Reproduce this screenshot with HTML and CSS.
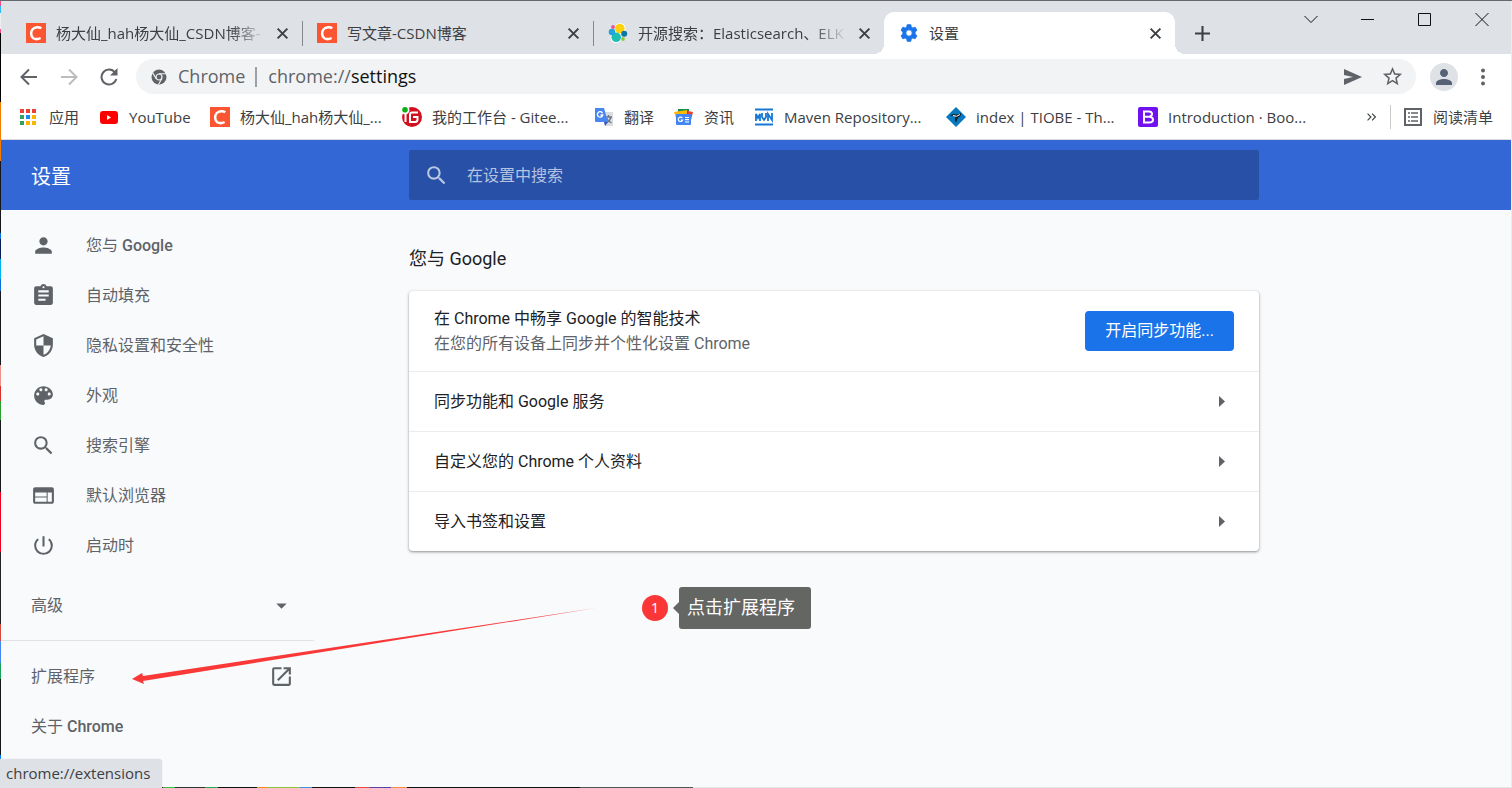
FILE: index.html
```html
<!DOCTYPE html>
<html lang="zh-CN">
<head>
<meta charset="utf-8">
<title>设置</title>
<link rel="stylesheet" href="styles.css">
</head>
<body>
<svg width="0" height="0" class="defs" aria-hidden="true">
  <symbol id="i-close" viewBox="0 0 12 12"><path d="M1.500 1.500l9 9M10.500 1.500l-9 9" stroke="currentColor" stroke-width="1.800" fill="none"/></symbol>
  <symbol id="i-csdn" viewBox="0 0 20 20"><path fill="#fc5531" d="M0 0h20v20H0z"/><path d="M15.300 5.300C13 3.600 9 3.700 6.800 6c-2.400 2.700-2.200 7.400.5 9.200 2.100 1.300 5 1 7.300-.2" fill="none" stroke="#fff" stroke-width="2.500"/></symbol>
  <symbol id="i-search" viewBox="0 0 24 24"><path d="M15.500 14h-.79l-.28-.27A6.471 6.471 0 0 0 16 9.500 6.500 6.500 0 1 0 9.500 16c1.610 0 3.090-.59 4.230-1.570l.27.28v.79l5 4.990L20.490 19l-4.990-5zm-6 0C7.010 14 5 11.990 5 9.500S7.010 5 9.500 5 14 7.010 14 9.500 11.990 14 9.500 14z"/></symbol>
  <symbol id="i-person" viewBox="0 0 24 24"><path d="M12 12c2.210 0 4-1.790 4-4s-1.790-4-4-4-4 1.790-4 4 1.790 4 4 4zm0 2c-2.670 0-8 1.340-8 4v2h16v-2c0-2.660-5.330-4-8-4z"/></symbol>
  <symbol id="i-right" viewBox="0 0 6 11"><path d="M0 0l6 5.500L0 11z"/></symbol>
</svg>
<div class="window">
  <header class="tabstrip">
    <div class="tabs">
      <div class="tab">
        <svg class="favicon"><use href="#i-csdn"/></svg>
        <span class="tab-title fade">杨大仙_hah杨大仙_CSDN博客-</span>
        <button class="tab-close" aria-label="关闭"><svg><use href="#i-close"/></svg></button>
      </div>
      <div class="tab">
        <svg class="favicon"><use href="#i-csdn"/></svg>
        <span class="tab-title">写文章-CSDN博客</span>
        <button class="tab-close" aria-label="关闭"><svg><use href="#i-close"/></svg></button>
      </div>
      <div class="tab">
        <svg class="favicon" viewBox="0 0 20 20"><circle cx="12" cy="5.500" r="5.500" fill="#fff"/><circle cx="8" cy="14.500" r="5.500" fill="#fff"/><circle cx="11.800" cy="5.600" r="4.800" fill="#fed10a"/><circle cx="8.200" cy="14.300" r="4.800" fill="#1bbfb3"/><circle cx="4" cy="9" r="3.300" fill="#24a3dc"/><circle cx="16.200" cy="10.800" r="3" fill="#0b77a8"/><circle cx="5" cy="4" r="1.900" fill="#ef5098"/><circle cx="15" cy="16" r="1.900" fill="#93c83e"/></svg>
        <span class="tab-title fade">开源搜索：Elasticsearch、ELK</span>
        <button class="tab-close" aria-label="关闭"><svg><use href="#i-close"/></svg></button>
      </div>
      <div class="tab tab--active">
        <svg class="favicon blue" viewBox="0 0 24 24"><path d="M9.800 2h4.400l.5 2.900 1.900 1.100 2.800-1 2.200 3.800-2.300 1.900v2.600l2.300 1.900-2.200 3.800-2.800-1-1.900 1.100-.5 2.900H9.800l-.5-2.900L7.400 18l-2.800 1-2.200-3.800 2.300-1.900v-2.600L2.400 8.800 4.600 5l2.800 1 1.900-1.100zM12 8.200a3.800 3.800 0 1 0 0 7.600 3.800 3.800 0 0 0 0-7.600z" fill-rule="evenodd" stroke="currentColor" stroke-linejoin="round"/></svg>
        <span class="tab-title">设置</span>
        <button class="tab-close" aria-label="关闭"><svg><use href="#i-close"/></svg></button>
      </div>
      <button class="newtab" aria-label="新标签页"><svg viewBox="0 0 16 16"><path d="M8 0v16M0 8h16" stroke="currentColor" stroke-width="2.200"/></svg></button>
    </div>
    <div class="controls">
      <button aria-label="搜索标签页"><svg viewBox="0 0 14 14"><path d="M.5 4L7 10.500 13.500 4"/></svg></button>
      <button aria-label="最小化"><svg viewBox="0 0 14 14"><path d="M0 7.500h13"/></svg></button>
      <button aria-label="最大化"><svg viewBox="0 0 14 14"><path d="M.5 1.500h12v12H.5z"/></svg></button>
      <button aria-label="关闭窗口"><svg viewBox="0 0 14 14"><path d="M.5 1l13 13M13.500 1l-13 13"/></svg></button>
    </div>
  </header>

  <div class="toolbar">
    <button class="nav" aria-label="后退"><svg viewBox="0 0 18 18"><path d="M17 9H2M9 1.500L1.500 9 9 16.500"/></svg></button>
    <button class="nav nav--off" aria-label="前进"><svg viewBox="0 0 18 18"><path d="M1 9h15M9 1.500L16.500 9 9 16.500"/></svg></button>
    <button class="nav" aria-label="重新加载"><svg viewBox="0 0 18 18"><path d="M15 4.500A7.500 7.500 0 1 0 16.300 11"/><path d="M17.500 0v7.500H10z" class="solid"/></svg></button>
    <div class="omnibox">
      <svg class="chrome-icon" viewBox="0 0 16 16"><circle cx="8" cy="8" r="7.500" fill="#5f6368"/><circle cx="8" cy="8" r="3" fill="none" stroke="#f1f3f4" stroke-width="1.200"/><path d="M8 4.700h7M5.200 9.700L1.700 3.900M10.900 9.600L7.500 15.500" stroke="#f1f3f4" stroke-width="1.100"/></svg>
      <span class="site">Chrome</span><span class="bar"></span>
      <span class="url">chrome://<b>settings</b></span>
      <button class="send" aria-label="发送"><svg viewBox="0 0 18 16"><path d="M0 0l18 8L0 16v-6l9-2-9-2z"/></svg></button>
      <button aria-label="为此页添加书签"><svg viewBox="0 0 24 24"><path d="M22 9.240l-7.190-.62L12 2 9.190 8.630 2 9.240l5.460 4.730L5.820 21 12 17.270 18.180 21l-1.630-7.030L22 9.240zM12 15.400l-3.760 2.270 1-4.280-3.320-2.880 4.380-.38L12 6.100l1.710 4.040 4.380.38-3.320 2.880 1 4.280L12 15.400z"/></svg></button>
    </div>
    <button class="avatar" aria-label="个人资料"><svg><use href="#i-person"/></svg></button>
    <button class="menu" aria-label="菜单"><svg viewBox="0 0 4 18"><circle cx="2" cy="2.500" r="2"/><circle cx="2" cy="9" r="2"/><circle cx="2" cy="15.500" r="2"/></svg></button>
  </div>

  <nav class="bookmarks">
    <a href="#" class="bm bm--short"><svg viewBox="0 0 20 20"><g fill="#ea4335"><path d="M1 2h4v4H1zM7 2h4v4H7zM13 2h4v4h-4z"/></g><path fill="#34a060" d="M1 8h4v4H1zM1 14h4v4H1z"/><path fill="#1a86f0" d="M7 8h4v4H7z"/><path fill="#fbb400" d="M13 8h4v4h-4zM13 14h4v4h-4z"/><path fill="#fbb400" d="M7 14h4v4H7z"/></svg><span>应用</span></a>
    <a href="#" class="bm bm--mid"><svg viewBox="0 0 20 20"><rect x="1" y="4" width="18" height="13" rx="3" fill="#f00"/><path d="M8 8v5l4-2.500z" fill="#fff"/></svg><span>YouTube</span></a>
    <a href="#" class="bm"><svg><use href="#i-csdn"/></svg><span>杨大仙_hah杨大仙_...</span></a>
    <a href="#" class="bm"><svg viewBox="0 0 20 20"><circle cx="10" cy="10" r="10" fill="#d0101f"/><circle cx="3" cy="3" r="4.500" fill="#fff"/><circle cx="3" cy="2.800" r="2.800" fill="#0db014"/><path d="M3.500 7v8M16 5.500H10Q8 5.500 8 7.500V15h5q2.500 0 2.500-2.500V10H11" fill="none" stroke="#fff" stroke-width="2"/></svg><span>我的工作台 - Gitee...</span></a>
    <a href="#" class="bm bm--short"><svg viewBox="0 0 20 20"><path fill="#dadce0" d="M9 5h10v14h-8z"/><path d="M11 10h7M14.500 8v2M12 16q4-2 5-6M12.500 11q1 3 5 5" stroke="#6a7785" stroke-width="1.300" fill="none"/><path fill="#4a86f2" d="M1 1h9l4 14H2q-1 0-1-1z"/><path fill="#3454bd" d="M10 15h4l-3 4z"/><path d="M8.500 6.200A2.700 2.700 0 1 0 8.700 8H6.500" fill="none" stroke="#fff" stroke-width="1.300"/></svg><span>翻译</span></a>
    <a href="#" class="bm bm--short"><svg viewBox="0 0 20 20"><path fill="#188c46" d="M4 2h11v6H4z"/><path fill="#ea4335" d="M14 4l5 1-2 8h-3z"/><path fill="#fbb806" d="M0 5l13-2v8H2z"/><rect x="2" y="7" width="15" height="11" rx="1" fill="#4285f4"/><path d="M8.300 11a2.200 2.200 0 1 0 .3 2H6.800M11 10.500h4M11 12.700h4M11 15h4" fill="none" stroke="#fff" stroke-width="1.200"/></svg><span>资讯</span></a>
    <a href="#" class="bm"><svg viewBox="0 0 20 20"><path d="M1 2.500h18M1 17.500h18" stroke="#1778d3" stroke-width="2"/><path d="M2 14V7l2 4 2-4v7M8 6v4l2 3 2-3V6M14 14V7l4 6V6" fill="none" stroke="#1778d3" stroke-width="1.800"/></svg><span>Maven Repository...</span></a>
    <a href="#" class="bm"><svg viewBox="0 0 20 20"><path fill="#0879bd" d="M10 0l10 10-10 10L0 10z"/><path d="M4 9Q7 6 10 7.500q3 0 5-1.500 0 4-3 4.500l-2 5q-2-3 0-6-3-1-6-.5z" fill="#101820"/><path d="M7 8.500q4 2 7-1" stroke="#fff" fill="none"/></svg><span>index | TIOBE - Th...</span></a>
    <a href="#" class="bm"><svg viewBox="0 0 20 20"><rect width="20" height="20" rx="2" fill="#7111f2"/><path d="M6 4.500h5q3 0 3 2.500 0 2-2.500 2.700Q15 10 15 12.700 15 15.500 11 15.500H6zM6 9.700h5.500" fill="none" stroke="#fff" stroke-width="2"/></svg><span>Introduction · Boo...</span></a>
    <button class="more" aria-label="更多书签"><svg viewBox="0 0 8 7"><path d="M.5.5l3 3-3 3M4.500.5l3 3-3 3"/></svg></button>
    <a href="#" class="bm reading"><svg viewBox="0 0 20 20"><path d="M2 2h16v16H2z" fill="none" stroke="#5f6368" stroke-width="2"/><path d="M5 6h2M5 10h2M5 14h2M8 6h7M8 10h7M8 14h7" stroke="#5f6368" stroke-width="1.500"/></svg><span>阅读清单</span></a>
  </nav>

  <div class="settings-bar">
    <h1>设置</h1>
    <label class="search"><svg><use href="#i-search"/></svg><input type="text" placeholder="在设置中搜索" aria-label="在设置中搜索"></label>
  </div>

  <div class="content">
    <nav class="sidebar">
      <a href="#"><svg><use href="#i-person"/></svg><span>您与 <b>Google</b></span></a>
      <a href="#"><svg viewBox="0 0 24 24"><path d="M19 3h-4.180C14.400 1.840 13.300 1 12 1c-1.300 0-2.400.84-2.820 2H5c-1.100 0-2 .9-2 2v14c0 1.100.9 2 2 2h14c1.100 0 2-.9 2-2V5c0-1.100-.9-2-2-2zm-7 0c.55 0 1 .45 1 1s-.45 1-1 1-1-.45-1-1 .45-1 1-1zm2 14H7v-2h7v2zm3-4H7v-2h10v2zm0-4H7V7h10v2z"/></svg><span>自动填充</span></a>
      <a href="#"><svg viewBox="0 0 24 24"><path d="M12 1L3 5v6c0 5.550 3.840 10.740 9 12 5.160-1.260 9-6.450 9-12V5l-9-4zm0 10.990h7c-.53 4.120-3.280 7.790-7 8.940V12H5V6.300l7-3.110v8.800z"/></svg><span>隐私设置和安全性</span></a>
      <a href="#"><svg viewBox="0 0 24 24"><path d="M12 3c-4.970 0-9 4.030-9 9s4.030 9 9 9c.83 0 1.500-.67 1.500-1.500 0-.39-.15-.74-.39-1.010-.23-.26-.38-.61-.38-.99 0-.83.67-1.500 1.500-1.500H16c2.760 0 5-2.240 5-5 0-4.420-4.030-8-9-8zm-5.500 9c-.83 0-1.500-.67-1.500-1.500S5.670 9 6.500 9 8 9.670 8 10.500 7.330 12 6.500 12zm3-4C8.670 8 8 7.330 8 6.500S8.670 5 9.500 5s1.500.67 1.500 1.500S10.330 8 9.500 8zm5 0c-.83 0-1.500-.67-1.500-1.500S13.670 5 14.500 5s1.500.67 1.500 1.500S15.330 8 14.500 8zm3 4c-.83 0-1.500-.67-1.500-1.500S16.670 9 17.500 9s1.500.67 1.500 1.500-.67 1.500-1.500 1.500z"/></svg><span>外观</span></a>
      <a href="#"><svg><use href="#i-search"/></svg><span>搜索引擎</span></a>
      <a href="#"><svg viewBox="0 0 24 24"><path d="M20 4H4c-1.100 0-1.990.9-1.990 2L2 18c0 1.100.9 2 2 2h16c1.100 0 2-.9 2-2V6c0-1.100-.9-2-2-2zm-5 14H4v-4h11v4zm0-5H4V9h11v4zm5 5h-4V9h4v9z"/></svg><span>默认浏览器</span></a>
      <a href="#"><svg viewBox="0 0 24 24"><path d="M13 3h-2v10h2V3zm4.830 2.170l-1.420 1.420A6.920 6.920 0 0 1 19 12c0 3.870-3.130 7-7 7s-7-3.130-7-7c0-2.190 1.010-4.140 2.580-5.420L6.170 5.170A8.932 8.932 0 0 0 3 12a9 9 0 0 0 18 0c0-2.740-1.230-5.180-3.170-6.830z"/></svg><span>启动时</span></a>
      <button class="advanced"><span>高级</span><svg viewBox="0 0 24 24"><path d="M7 10l5 5 5-5z"/></svg></button>
      <hr>
      <a href="#" class="wide"><span>扩展程序</span><svg viewBox="0 0 24 24"><path d="M19 19H5V5h7V3H5a2 2 0 0 0-2 2v14a2 2 0 0 0 2 2h14c1.100 0 2-.9 2-2v-7h-2v7zM14 3v2h3.590l-9.830 9.830 1.410 1.410L19 6.410V10h2V3h-7z"/></svg></a>
      <a href="#" class="wide"><span>关于 <b>Chrome</b></span></a>
    </nav>
    <main>
      <h2>您与 Google</h2>
      <section class="card">
        <div class="sync">
          <div><p>在 Chrome 中畅享 Google 的智能技术</p><p class="sub">在您的所有设备上同步并个性化设置 Chrome</p></div>
          <button class="primary">开启同步功能...</button>
        </div>
        <a href="#" class="row"><span>同步功能和 Google 服务</span><svg><use href="#i-right"/></svg></a>
        <a href="#" class="row"><span>自定义您的 Chrome 个人资料</span><svg><use href="#i-right"/></svg></a>
        <a href="#" class="row"><span>导入书签和设置</span><svg><use href="#i-right"/></svg></a>
      </section>
    </main>
    <svg class="arrow" viewBox="0 0 464 76" aria-hidden="true"><path fill="#fb3838" d="M0 71L10 65l1 3L464 0 11 73l1 3z"/></svg>
    <div class="note"><span class="num">1</span><span class="tip">点击扩展程序</span></div>
  </div>
  <div class="status">chrome://extensions</div>
</div>
</body>
</html>
```

FILE: styles.css
```css
* { box-sizing: border-box; }
body {
  margin: 0;
  font-family: "Open Sans", "Noto Sans CJK SC", sans-serif;
  font-size: 15px;
  color: #3c4043;
}
.defs { position: absolute; }
button { border: 0; background: none; padding: 0; margin: 0; font: inherit; color: inherit; }
a { color: inherit; text-decoration: none; }
svg { display: block; flex: none; fill: currentColor; }

/* one-pixel frame through which the desktop shows */
.window {
  position: relative;
  min-height: 100vh;
  display: flex;
  flex-direction: column;
  border-top: 1px solid #66686c;
  padding: 0 1px 1px;
  background:
    linear-gradient(90deg, #1c1c1c 163px, #35c04a 163px 175px, #333 175px 205px, #2aa74a 205px 218px, #111 218px 257px, #f08a18 257px 267px, #8cc63f 267px 300px, #3c96dc 300px 312px, #111 312px 355px, #e84a3c 355px 370px, #5540b0 370px 391px, #f09040 391px 407px, #111 407px 580px, #555 580px 693px, #e4e5e7 693px) bottom / 100% 1px no-repeat,
    linear-gradient(#f0508c 5px, #30b8f0 5px 12px, #eee 12px 28px, #f0508c 28px 32px, #000 32px 101px, #f57c00 101px 160px, #16171c 160px 232px, #0a70e0 232px 238px, #07205a 238px 258px, #00b4f0 258px 278px, #0a70e0 278px 290px, #16171c 290px 364px, #f0928c 364px 385px, #d83030 385px 400px, #2ca02c 400px 419px, #18181c 419px 491px, #f00020 491px 551px, #222228 551px 623px, #d84a3c 623px 640px, #4285f4 640px 662px, #18a058 662px 678px, #16171c 678px 754px, #0a80f8 754px) left / 1px 100% no-repeat,
    #ececee;
}

.tabstrip { display: flex; justify-content: space-between; height: 53px; background: #dee1e6; }
.tabs { display: flex; align-items: flex-end; flex: 0 1 1230px; min-width: 0; padding-left: 10px; }
.tab {
  position: relative;
  flex: 0 1 291px;
  min-width: 0;
  height: 42px;
  display: flex;
  align-items: center;
  gap: 10px;
  padding: 0 13px 0 15px;
}
.tab:nth-child(-n+2)::after {
  content: "";
  position: absolute;
  right: -1px;
  top: 9px;
  width: 1px;
  height: 25px;
  background: #85888d;
}
.favicon { width: 20px; height: 20px; }
.blue { color: #1a73e8; }
.tab-title { flex: 1; min-width: 0; overflow: hidden; white-space: nowrap; line-height: 24px; }
.fade { -webkit-mask-image: linear-gradient(90deg, #000 calc(100% - 36px), transparent); mask-image: linear-gradient(90deg, #000 calc(100% - 36px), transparent); }
.tab-close, .tab-close svg { width: 13px; height: 13px; }
.tab--active { background: #fff; border-radius: 10px 10px 0 0; }
.tab--active::before, .tab--active::after {
  content: "";
  position: absolute;
  bottom: 0;
  width: 10px;
  height: 10px;
}
.tab--active::before { left: -10px; background: radial-gradient(circle at 0 0, transparent 10px, #fff 10px); }
.tab--active::after { right: -10px; background: radial-gradient(circle at 100% 0, transparent 10px, #fff 10px); }
.newtab { margin-left: 20px; height: 42px; }
.newtab svg { width: 15px; height: 15px; }
.controls { display: flex; padding-right: 1px; color: #111; }
.controls button { width: 57px; height: 36px; display: grid; place-items: center; }
.controls svg { width: 14px; height: 14px; fill: none; stroke: currentColor; }

.toolbar { display: flex; align-items: center; height: 45px; padding: 0 18px; background: #fff; color: #5f6368; }
.nav { width: 40px; height: 36px; padding-left: 1px; }
.nav svg { width: 18px; height: 18px; fill: none; stroke: currentColor; stroke-width: 2; }
.nav .solid { fill: currentColor; stroke: none; }
.nav--off { color: #babcbe; }
.omnibox {
  flex: 1;
  min-width: 0;
  display: flex;
  align-items: center;
  height: 35px;
  margin-left: -3px;
  padding: 0 12px 0 15px;
  border-radius: 18px;
  background: #f1f3f4;
  font-size: 18px;
  line-height: 35px;
}
.chrome-icon { width: 16px; height: 16px; }
.site { margin-left: 11px; }
.bar { width: 2px; height: 20px; margin: 0 11px 0 10px; background: #9aa0a6; }
.url { flex: 1; }
.url b { font-weight: 400; color: #111; }
.omnibox button svg { width: 23px; height: 23px; }
.omnibox .send { margin-right: 19px; }
.omnibox .send svg { width: 18px; height: 16px; }
.avatar { width: 28px; height: 28px; margin-left: 14px; border-radius: 50%; background: #dee1e6; color: #566176; display: grid; place-items: center; }
.avatar svg { width: 24px; height: 24px; }
.menu { margin: 0 8px 0 23px; }
.menu svg { width: 4px; height: 18px; }

.bookmarks { display: flex; align-items: center; height: 41px; padding: 0 18px 4px; background: #fff; border-bottom: 1px solid #dadce0; }
.bm { display: flex; align-items: center; gap: 10px; flex: 0 1 192px; min-width: 0; white-space: nowrap; line-height: 24px; }
.bm svg { width: 20px; height: 20px; }
.bm--short { flex-basis: 80px; }
.bm--mid { flex-basis: 111px; }
.more { margin-left: auto; padding-right: 14px; }
.more svg { width: 9px; height: 8px; fill: none; stroke: #3c4043; stroke-width: 1; }
.reading { flex: none; border-left: 1px solid #c8cacd; padding-left: 12px; }

.settings-bar {
  display: grid;
  grid-template-columns: 408px minmax(0, 850px) 1fr;
  align-items: center;
  height: 70px;
  background: #3367d6;
  color: #fff;
  font-family: Roboto, "Noto Sans CJK SC", sans-serif;
}
h1 { margin: 0; padding: 4px 0 0 30px; font-size: 20px; font-weight: 400; line-height: 30px; }
.search { display: flex; align-items: center; gap: 18px; height: 50px; padding: 0 15px; border-radius: 2px; background: #2850a7; color: #bbc8e3; }
.search svg { width: 25px; height: 25px; }
.search input { flex: 1; min-width: 0; padding: 0; border: 0; background: none; color: #fff; font: inherit; font-size: 16px; }
.search input::placeholder { color: #b6c3e0; }

.content {
  position: relative;
  flex: 1;
  display: grid;
  grid-template-columns: 313px minmax(0, 945px) 1fr;
  background: #f8fafc;
  font-family: Roboto, "Noto Sans CJK SC", sans-serif;
  font-size: 16px;
}
.sidebar { padding-top: 10px; color: #5f6368; }
.sidebar a, .advanced { display: flex; align-items: center; gap: 30px; width: 100%; height: 50px; padding: 0 20px 0 30px; line-height: 24px; }
.sidebar span { padding-top: 2px; }
.sidebar b { font-weight: 500; }
.sidebar svg { width: 25px; height: 25px; }
.sidebar .advanced, .sidebar .wide { justify-content: space-between; }
.advanced { margin-top: 10px; }
hr { margin: 10px 0; border: 0; border-top: 1px solid #e0e2e5; }
main { padding: 34px 0 60px 95px; }
h2 { margin: 0 0 17px; font-size: 18px; font-weight: 400; line-height: 30px; color: #202124; }
.card { border-radius: 4px; background: #fff; color: #202124; box-shadow: 0 1px 2px rgba(60, 64, 67, .4), 0 1px 3px 1px rgba(60, 64, 67, .15); }
.sync { display: flex; align-items: center; justify-content: space-between; min-height: 80px; padding: 0 25px; }
.sync p { margin: 0; line-height: 25px; }
.sync .sub { color: #5f6368; }
.primary { height: 40px; padding: 0 20px; border-radius: 4px; background: #1a73e8; color: #fff; line-height: 24px; white-space: nowrap; }
.row { display: flex; align-items: center; justify-content: space-between; height: 60px; padding: 0 34px 0 25px; border-top: 1px solid #ebecee; line-height: 24px; }
.row svg { width: 6px; height: 11px; color: #5f6368; }

/* annotations drawn over the page */
.arrow { position: absolute; left: 131px; top: 398px; width: 464px; height: 76px; pointer-events: none; }
.note { position: absolute; left: 641px; top: 377px; display: flex; align-items: center; gap: 11px; color: #fff; }
.num { width: 26px; height: 26px; border-radius: 50%; background: #fb3636; text-align: center; font: 15px/25px "Open Sans", sans-serif; }
.tip { position: relative; padding: 0 16px 0 8px; border-radius: 3px; background: #646664; font-size: 18px; line-height: 42px; }
.tip::before { content: ""; position: absolute; left: -6px; top: 15px; border: 6px solid transparent; border-left: 0; border-right-color: #646664; }
.status { position: absolute; left: 0; bottom: 0; padding: 0 12px 0 6px; border-radius: 0 4px 0 0; background: #dee1e6; line-height: 29px; box-shadow: 0 0 1px #b8bbc0; }
```
